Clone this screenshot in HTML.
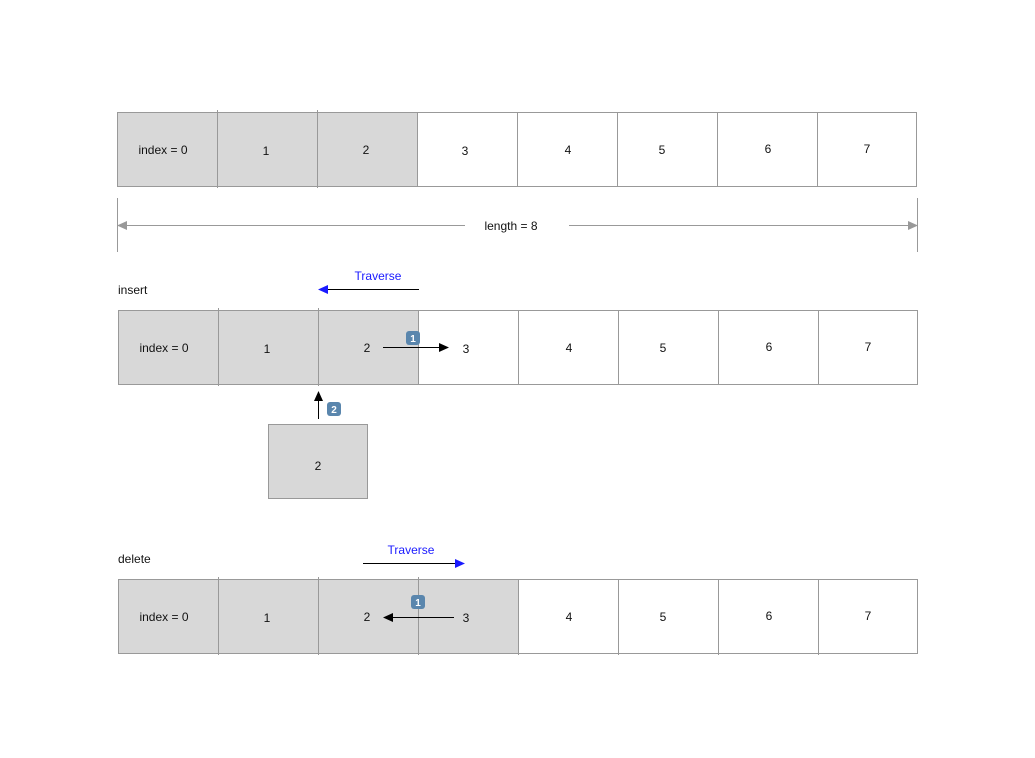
<!DOCTYPE html>
<html><head><style>body{margin:0;background:#fff}svg{display:block}text{font-family:"Liberation Sans",sans-serif;font-size:12px;fill:#111}</style></head><body>
<svg width="1035" height="758" viewBox="0 0 1035 758">
<g stroke="#999" stroke-width="1">
<rect x="117.5" y="112.5" width="300" height="74" fill="#d8d8d8"/>
<rect x="417.5" y="112.5" width="499" height="74" fill="#fff"/>
<path d="M217.5 110V188M317.5 110V188M417.5 112V187M517.5 112V187M617.5 112V187M717.5 112V187M817.5 112V187"/>
<rect x="118.5" y="310.5" width="300" height="74" fill="#d8d8d8"/>
<rect x="418.5" y="310.5" width="499" height="74" fill="#fff"/>
<path d="M218.5 308V386M318.5 308V386M418.5 310V385M518.5 310V385M618.5 310V385M718.5 310V385M818.5 310V385"/>
<rect x="268.5" y="424.5" width="99" height="74" fill="#d8d8d8"/>
<rect x="118.5" y="579.5" width="400" height="74" fill="#d8d8d8"/>
<rect x="518.5" y="579.5" width="399" height="74" fill="#fff"/>
<path d="M218.5 577V655M318.5 577V655M418.5 577V655M518.5 579V655M618.5 579V655M718.5 579V655M818.5 579V655"/>
<path d="M117.5 198V252M917.5 198V252M126 225.5H465M569 225.5H909"/>
</g>
<path d="M117 225.5L127 221V230Z M918 225.5L908 221V230Z" fill="#999"/>
<g text-anchor="middle">
<text x="163" y="154">index = 0</text><text x="266" y="155">1</text><text x="366" y="154">2</text><text x="465" y="155">3</text><text x="568" y="154">4</text><text x="662" y="154">5</text><text x="768" y="153">6</text><text x="867" y="153">7</text>
<text x="511" y="230">length = 8</text>
<text x="164" y="352">index = 0</text><text x="267" y="353">1</text><text x="367" y="352">2</text><text x="466" y="353">3</text><text x="569" y="352">4</text><text x="663" y="352">5</text><text x="769" y="351">6</text><text x="868" y="351">7</text>
<text x="318" y="470">2</text>
<text x="164" y="621">index = 0</text><text x="267" y="622">1</text><text x="367" y="621">2</text><text x="466" y="622">3</text><text x="569" y="621">4</text><text x="663" y="621">5</text><text x="769" y="620">6</text><text x="868" y="620">7</text>
<text x="378" y="280" style="fill:#1a1aff">Traverse</text>
<text x="411" y="554" style="fill:#1a1aff">Traverse</text>
</g>
<text x="118" y="294">insert</text>
<text x="118" y="563">delete</text>
<path d="M327 289.5H419" stroke="#000"/><path d="M318 289.5L328 285V294Z" fill="#1a1aff"/>
<path d="M363 563.5H456" stroke="#000"/><path d="M465 563.5L455 559V568Z" fill="#1a1aff"/>
<path d="M383 347.5H440" stroke="#000"/><path d="M449 347.5L439 343V352Z" fill="#000"/>
<path d="M318.5 419V400" stroke="#000"/><path d="M318.5 391L314 401H323Z" fill="#000"/>
<path d="M392 617.5H454" stroke="#000"/><path d="M383 617.5L393 613V622Z" fill="#000"/>
<g font-weight="bold">
<rect x="406" y="331" width="14" height="14" rx="3" fill="#5a86ad"/><text x="413" y="342" text-anchor="middle" style="fill:#fff;font-size:10px;font-weight:bold">1</text>
<rect x="327" y="402" width="14" height="14" rx="3" fill="#5a86ad"/><text x="334" y="413" text-anchor="middle" style="fill:#fff;font-size:10px;font-weight:bold">2</text>
<rect x="411" y="595" width="14" height="14" rx="3" fill="#5a86ad"/><text x="418" y="606" text-anchor="middle" style="fill:#fff;font-size:10px;font-weight:bold">1</text>
</g>
</svg>
</body></html>
